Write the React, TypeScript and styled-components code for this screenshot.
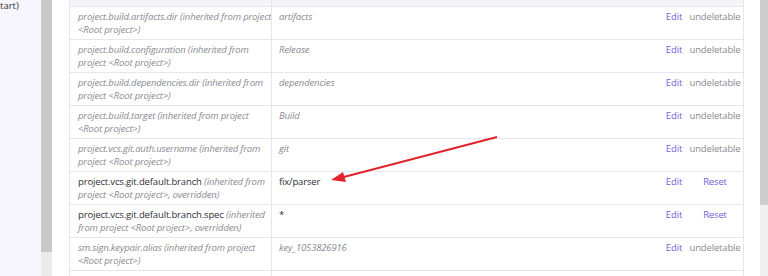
import styled, { createGlobalStyle } from "styled-components";

const GlobalStyle = createGlobalStyle`
  html, body {
    margin: 0;
    padding: 0;
    background: #fff;
    overflow: hidden;
  }
  body {
    font-family: "Open Sans", "Noto Sans", sans-serif;
  }
`;

type Param = {
  name: string;
  note: [string, string];
  value: string;
  own?: boolean;
};

const params: Param[] = [
  { name: "project.build.artifacts.dir", note: ["(inherited from project", "<Root project>)"], value: "artifacts" },
  { name: "project.build.configuration", note: ["(inherited from", "project <Root project>)"], value: "Release" },
  { name: "project.build.dependencies.dir", note: ["(inherited from", "project <Root project>)"], value: "dependencies" },
  { name: "project.build.target", note: ["(inherited from project", "<Root project>)"], value: "Build" },
  { name: "project.vcs.git.auth.username", note: ["(inherited from", "project <Root project>)"], value: "git" },
  { name: "project.vcs.git.default.branch", note: ["(inherited from", "project <Root project>, overridden)"], value: "fix/parser", own: true },
  { name: "project.vcs.git.default.branch.spec", note: ["(inherited", "from project <Root project>, overridden)"], value: "*", own: true },
  { name: "sm.sign.keypair.alias", note: ["(inherited from project", "<Root project>)"], value: "key_1053826916" },
];

export default function App() {
  return (
    <Page>
      <GlobalStyle />
      <SidePane>
        <SideText>tart)</SideText>
      </SidePane>
      <SideScroll>
        <Thumb $height={252} $color="#c8c8c8" />
      </SideScroll>

      <Main>
        <Table>
          <HeadCell />
          <HeadCell $last />
          {params.map((p) => (
            <Row key={p.name}>
              <KeyCell>
                {p.own ? <KeyName>{p.name}</KeyName> : <Note>{p.name}</Note>}{" "}
                <Note>{p.note[0]}</Note>
                <br />
                <Note>{p.note[1]}</Note>
              </KeyCell>
              <ValueCell>
                <Value $own={p.own}>{p.value}</Value>
                <Actions>
                  <ActionLink>Edit</ActionLink>
                  <State $link={p.own}>{p.own ? "Reset" : "undeletable"}</State>
                </Actions>
              </ValueCell>
            </Row>
          ))}
          <KeyCell />
          <ValueCell />
        </Table>

        <Arrow width="200" height="60" viewBox="0 0 200 60">
          <line x1="193" y1="4" x2="36" y2="45" stroke="#e0242b" strokeWidth="2" />
          <polygon points="27,47 39,39 42,49" fill="#e0242b" />
        </Arrow>
      </Main>

      <PageScroll>
        <Thumb $height={205} $color="#cdcdcd" />
      </PageScroll>
    </Page>
  );
}

const Page = styled.div`
  display: flex;
  width: 768px;
  height: 276px;
  overflow: hidden;
`;

const SidePane = styled.div`
  width: 41px;
  background: #f7f6fe;
  flex-shrink: 0;
  overflow: hidden;
`;

const SideText = styled.div`
  font-size: 9.5px;
  color: #333;
  line-height: 11px;
`;

const SideScroll = styled.div`
  width: 11px;
  background: #ebebeb;
  flex-shrink: 0;
`;

const PageScroll = styled.div`
  width: 8px;
  margin-left: 16px;
  background: #f0f0f0;
  flex-shrink: 0;
`;

const Thumb = styled.div<{ $height: number; $color: string }>`
  height: ${(p) => p.$height}px;
  background: ${(p) => p.$color};
`;

const Main = styled.div`
  position: relative;
  flex: 1;
  padding-left: 17px;
`;

const Table = styled.div`
  display: grid;
  grid-template-columns: 202px 1fr;
  border-left: 1px solid #e6e6ee;
  border-right: 1px solid #e6e6ee;
  font-size: 9.5px;
  letter-spacing: -0.15px;
  line-height: 13px;
`;

const HeadCell = styled.div<{ $last?: boolean }>`
  height: 6px;
  background: #f5f5f8;
  border-bottom: 1px solid #e6e6ee;
  border-right: ${(p) => (p.$last ? "none" : "1px solid #e6e6ee")};
`;

const Row = styled.div`
  display: contents;
`;

const KeyCell = styled.div`
  box-sizing: border-box;
  height: 33px;
  padding: 3px 0 0 8px;
  white-space: nowrap;
  overflow: hidden;
  border-bottom: 1px solid #e6e6ee;
  border-right: 1px solid #e6e6ee;
`;

const KeyName = styled.span`
  color: #2f2f38;
`;

const Note = styled.span`
  color: #8a8a92;
  font-style: italic;
`;

const ValueCell = styled.div`
  display: flex;
  align-items: flex-start;
  box-sizing: border-box;
  height: 33px;
  padding: 3px 0 0 7px;
  border-bottom: 1px solid #e6e6ee;
`;

const Value = styled.div<{ $own?: boolean }>`
  flex: 1;
  color: ${(p) => (p.$own ? "#2f2f38" : "#8a8a92")};
  font-style: ${(p) => (p.$own ? "normal" : "italic")};
`;

const Actions = styled.div`
  display: flex;
  padding-right: 2px;
`;

const ActionLink = styled.span`
  width: 30px;
  text-align: center;
  color: #7060d8;
`;

const State = styled.span<{ $link?: boolean }>`
  width: 52px;
  text-align: center;
  color: ${(p) => (p.$link ? "#7060d8" : "#8a8a92")};
`;

const Arrow = styled.svg`
  position: absolute;
  left: 252px;
  top: 133px;
  overflow: visible;
`;
